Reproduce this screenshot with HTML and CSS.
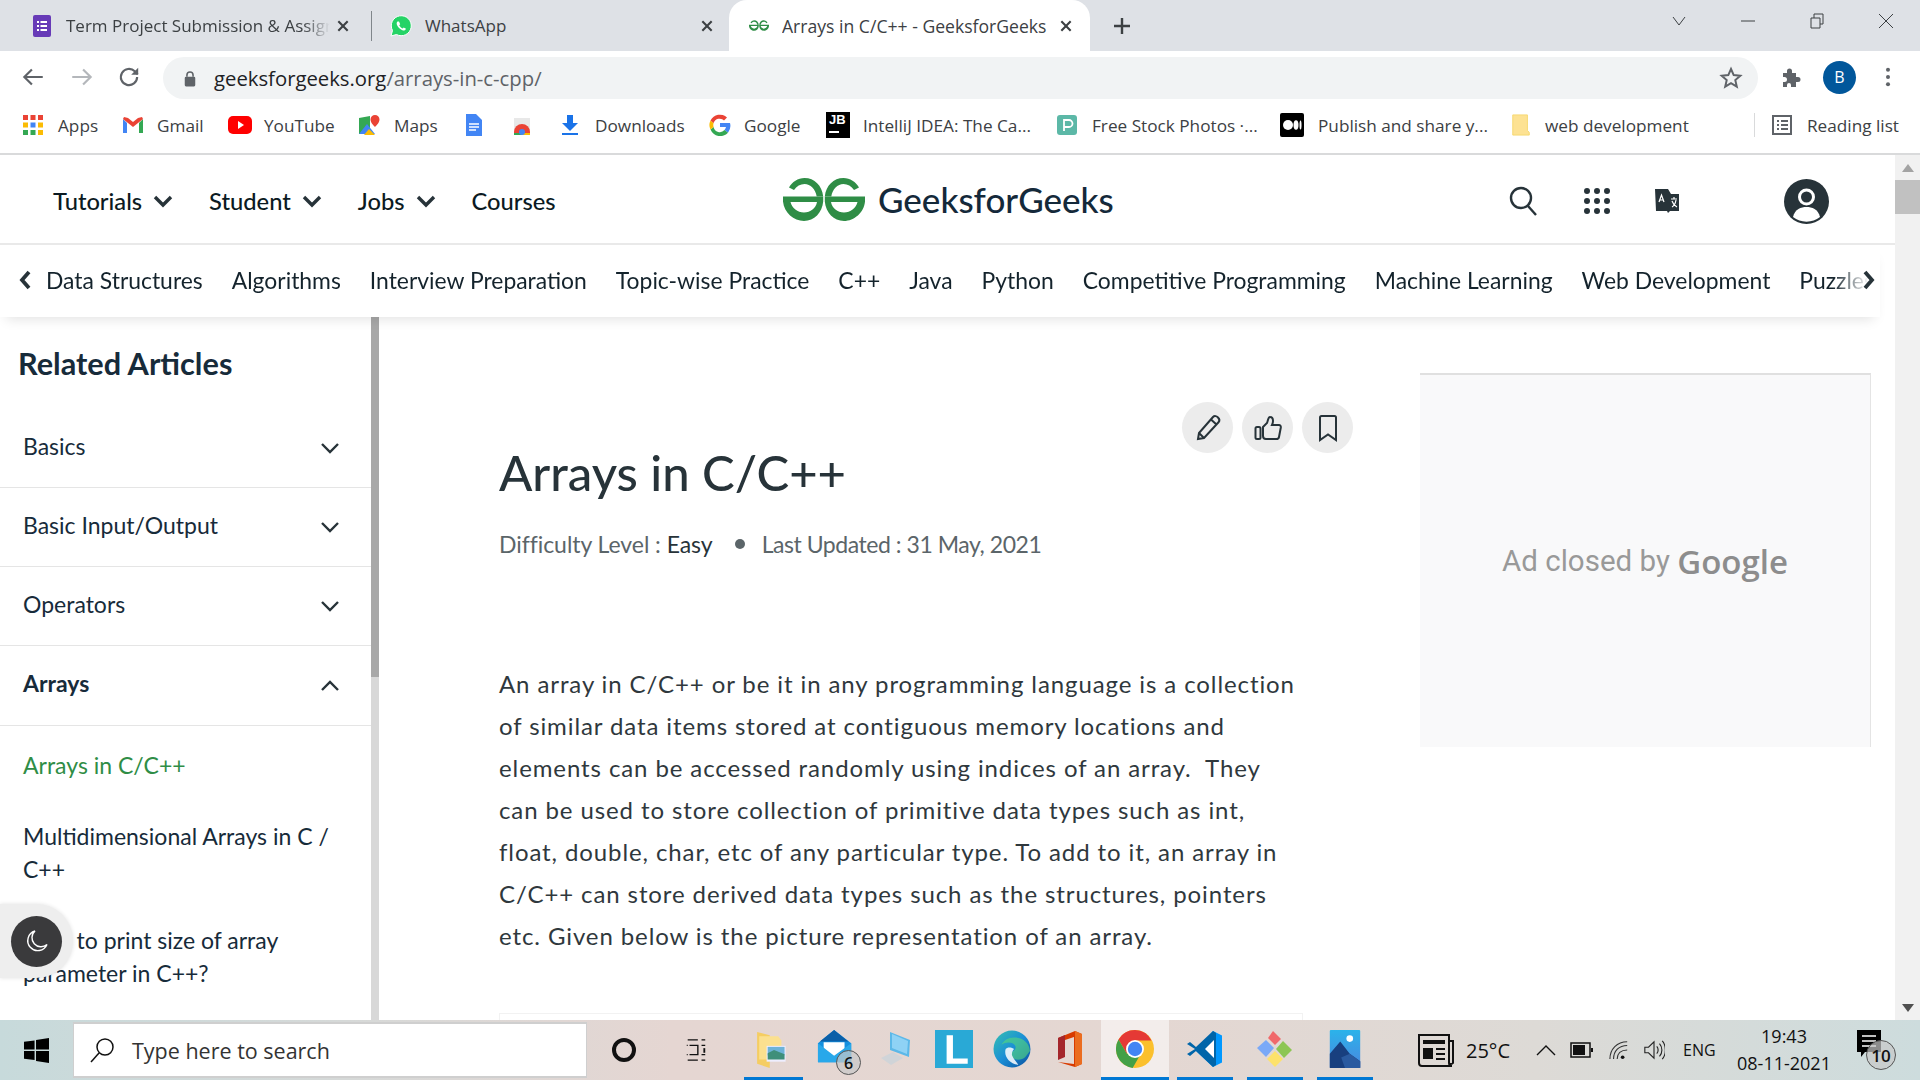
FILE: index.html
```html
<!DOCTYPE html>
<html lang="en">
<head>
<meta charset="utf-8">
<title>Arrays in C/C++ - GeeksforGeeks</title>
<link rel="stylesheet" href="styles.css">
</head>
<body>
<div class="screen">

<div class="tabstrip">
  <div class="tab tab-one">
    <svg class="fav" viewBox="0 0 24 24"><rect x="3" y="1" width="18" height="22" rx="2" fill="#673ab7"/><path d="M7 7h2v2H7zM7 11h2v2H7zM7 15h2v2H7zM10.500 7H17v2h-6.500zM10.500 11H17v2h-6.500zM10.500 15H17v2h-6.500z" fill="#fff"/></svg>
    <span class="tab-title fade">Term Project Submission &amp; Assignment</span>
    <svg class="tab-x" viewBox="0 0 12 12"><path d="M2 2l8 8M10 2l-8 8"/></svg>
  </div>
  <div class="tab-sep"></div>
  <div class="tab tab-two">
    <svg class="fav" viewBox="0 0 24 24"><path d="M2 22l1.500-5.500A10 10 0 1 1 7.500 20.500z" fill="#25d366" stroke="#fff" stroke-width="1"/><path d="M8.500 7.500c-1 1-1.200 2.500 0 4.500s3.500 4 5.500 4.500c1.500.3 2.500-.5 3-1.700l-2.300-1.300-1 1c-1.500-.5-2.700-1.800-3.500-3.300l1-1-1.200-2.700z" fill="#fff"/></svg>
    <span class="tab-title">WhatsApp</span>
    <svg class="tab-x" viewBox="0 0 12 12"><path d="M2 2l8 8M10 2l-8 8"/></svg>
  </div>
  <div class="tab tab-active">
    <svg class="fav-small" viewBox="0 0 82 43"><use href="#gfg"/></svg>
    <span class="tab-title">Arrays in C/C++ - GeeksforGeeks</span>
    <svg class="tab-x" viewBox="0 0 12 12"><path d="M2 2l8 8M10 2l-8 8"/></svg>
  </div>
  <svg class="newtab" viewBox="0 0 20 20"><path d="M10 2v16M2 10h16"/></svg>
  <div class="winctl">
    <svg viewBox="0 0 16 12"><path d="M2 2l6 8 6-8"/></svg>
    <svg viewBox="0 0 16 12"><path d="M1 6h14"/></svg>
    <svg viewBox="0 0 16 16"><path d="M2 5h9v10H2zM5 5V1h9v10h-3"/></svg>
    <svg viewBox="0 0 16 16"><path d="M1 1l14 14M15 1L1 15"/></svg>
  </div>
</div>

<div class="toolbar">
  <svg class="tool" viewBox="0 0 24 24"><path d="M21 12H4M11 5l-7 7 7 7" fill="none" stroke="#5f6368" stroke-width="2"/></svg>
  <svg class="tool" viewBox="0 0 24 24"><path d="M3 12h17M13 5l7 7-7 7" fill="none" stroke="#b4b7bb" stroke-width="2"/></svg>
  <svg class="tool" viewBox="0 0 24 24"><path d="M19.500 12a7.500 7.500 0 1 1-2.200-5.300L20 9.500" fill="none" stroke="#5f6368" stroke-width="2"/><path d="M20.500 3.500v6.500h-6.500z" fill="#5f6368"/></svg>
  <div class="omnibox">
    <svg class="lock" viewBox="0 0 16 20"><path d="M4.500 8V6a3.500 3.500 0 0 1 7 0v2" fill="none" stroke="#5f6368" stroke-width="1.800"/><rect x="2" y="8" width="12" height="11" rx="1.500" fill="#5f6368"/></svg>
    <span class="url"><b>geeksforgeeks.org</b>/arrays-in-c-cpp/</span>
    <svg class="star" viewBox="0 0 24 24"><path d="M12 3l2.700 6.100 6.600.6-5 4.400 1.500 6.500L12 17.200l-5.800 3.400 1.500-6.500-5-4.400 6.600-.6z" fill="none" stroke="#5f6368" stroke-width="2"/></svg>
  </div>
  <svg class="puzzle" viewBox="0 0 24 24"><path d="M4 8h4V6a2.500 2.500 0 0 1 5 0v2h4v4h2a2.500 2.500 0 0 1 0 5h-2v5h-5v-2a2 2 0 0 0-4 0v2H4v-5h1.500a2.500 2.500 0 0 0 0-5H4z" fill="#5f6368"/></svg>
  <div class="avatar">B</div>
  <svg class="menu" viewBox="0 0 6 24"><circle cx="3" cy="4" r="2.200"/><circle cx="3" cy="12" r="2.200"/><circle cx="3" cy="20" r="2.200"/></svg>
</div>

<div class="bookmarks">
  <div class="bm bm-apps"><svg class="bi" viewBox="0 0 22 22"><g fill="#ea4335"><rect x="1" y="1" width="5" height="5"/><rect x="8.500" y="1" width="5" height="5"/><rect x="16" y="1" width="5" height="5"/></g><g fill="#fbbc04"><rect x="1" y="8.500" width="5" height="5"/><rect x="16" y="8.500" width="5" height="5"/></g><rect x="8.500" y="8.500" width="5" height="5" fill="#4285f4"/><g fill="#34a853"><rect x="1" y="16" width="5" height="5"/><rect x="8.500" y="16" width="5" height="5"/></g><rect x="16" y="16" width="5" height="5" fill="#fbbc04"/></svg><span>Apps</span></div>
  <div class="bm bm-gmail"><svg class="bi" viewBox="0 0 22 22"><path d="M1 5v14h4V9z" fill="#4285f4"/><path d="M21 5v14h-4V9z" fill="#34a853"/><path d="M1 5l10 8 10-8-1-2-4 1-5 4-5-4-4-1z" fill="#ea4335"/></svg><span>Gmail</span></div>
  <div class="bm bm-yt"><svg class="bi-wide" viewBox="0 0 24 20"><rect y="1" width="24" height="18" rx="5" fill="#f00"/><path d="M10 6l6 4-6 4z" fill="#fff"/></svg><span>YouTube</span></div>
  <div class="bm bm-maps"><svg class="bi" viewBox="0 0 22 22"><path d="M1 4l11-2v18H1z" fill="#34a853"/><path d="M1 20l8-10 8 10z" fill="#4285f4"/><path d="M6 21l5-6 6 6z" fill="#fbbc04"/><path d="M17 1a4.500 4.500 0 0 0-4.500 4.500C12.500 9 17 13 17 13s4.500-4 4.500-7.500A4.500 4.500 0 0 0 17 1z" fill="#ea4335"/></svg><span>Maps</span></div>
  <div class="bm bm-docs"><svg class="bi" viewBox="0 0 22 22"><path d="M4 0h10l6 6v16H4z" fill="#4285f4"/><path d="M7 10h10M7 13h10M7 16h7" stroke="#fff" stroke-width="1.500"/></svg></div>
  <div class="bm bm-store"><svg class="bi" viewBox="0 0 22 22"><path d="M3 4h16v17H3z" fill="#e8e8e8"/><path d="M3 20v-2a8 8 0 0 1 16 0v2z" fill="#ea4335"/><path d="M3 21v-2h8v2z" fill="#34a853"/><path d="M11 21v-2h8v2z" fill="#fbbc04"/><circle cx="11" cy="18" r="3" fill="#4285f4"/></svg></div>
  <div class="bm bm-dl"><svg class="bi" viewBox="0 0 22 22"><path d="M8 1h6v8h5l-8 8-8-8h5zM3 19h16v2H3z" fill="#1a73e8"/></svg><span>Downloads</span></div>
  <div class="bm bm-g"><svg class="bi" viewBox="0 0 22 22"><path d="M11 9v4h6a6 6 0 0 1-1.500 3l3.500 2.700A11 11 0 0 0 21 9z" fill="#4285f4"/><path d="M4.600 13L1.500 15.600A10.500 10.500 0 0 0 19 18.700L15.500 16A6.300 6.300 0 0 1 4.600 13z" fill="#34a853"/><path d="M1.500 6.400a10.500 10.500 0 0 0 0 9.200L4.600 13a6.300 6.300 0 0 1 0-4z" fill="#fbbc04"/><path d="M1.500 6.400L4.600 9A6.300 6.300 0 0 1 15 6.500l3-3A10.500 10.500 0 0 0 1.500 6.400z" fill="#ea4335"/></svg><span>Google</span></div>
  <div class="bm bm-jb"><div class="jb">JB<i></i></div><span>IntelliJ IDEA: The Ca...</span></div>
  <div class="bm bm-px"><svg class="bi" viewBox="0 0 22 22"><rect x="1" y="1" width="20" height="20" rx="3" fill="#5cb8a7"/><path d="M8 5v12M8 6h5a3 3 0 0 1 0 7H8" fill="none" stroke="#fff" stroke-width="1.800"/></svg><span>Free Stock Photos ·...</span></div>
  <div class="bm bm-md"><svg class="bi-wide" viewBox="0 0 24 24"><rect width="24" height="24" rx="2" fill="#000"/><circle cx="8" cy="12" r="5" fill="#fff"/><ellipse cx="16" cy="12" rx="2.500" ry="4.800" fill="#fff"/><ellipse cx="20.500" cy="12" rx="1" ry="4.500" fill="#fff"/></svg><span>Publish and share y...</span></div>
  <div class="bm bm-fold"><svg class="bi" viewBox="0 0 22 24"><path d="M2 1h16v17l2 2v3H2z" fill="#fde293" stroke="#f6d86b"/></svg><span>web development</span></div>
  <div class="bm-sep"></div>
  <div class="bm bm-read"><svg class="bi" viewBox="0 0 22 22"><rect x="2" y="2" width="18" height="18" fill="none" stroke="#5f6368" stroke-width="2"/><path d="M6 7h2M10 7h7M6 11h2M10 11h7M6 15h2M10 15h7" stroke="#5f6368" stroke-width="1.800"/></svg><span>Reading list</span></div>
</div>

<div class="page">
  <div class="site">
    <header class="head">
      <nav class="menu-main">
        <a>Tutorials<svg class="chev" viewBox="0 0 20 14"><path d="M2 3l8 8 8-8"/></svg></a>
        <a>Student<svg class="chev" viewBox="0 0 20 14"><path d="M2 3l8 8 8-8"/></svg></a>
        <a>Jobs<svg class="chev" viewBox="0 0 20 14"><path d="M2 3l8 8 8-8"/></svg></a>
        <a>Courses</a>
      </nav>
      <div class="logo">
        <svg class="logo-mark" viewBox="0 0 82 43"><g id="gfg" fill="#2f8d46"><path d="M6 9.500C9 4 15 0 21.500 0 31.500 0 39 7.500 40.200 18.500H33.700C32.500 11 27.500 6 21.500 6 17.500 6 13.500 8 11 12z"/><path d="M0 18.500h40.200v5c-1 11-9 19.500-19.200 19.500S1 34.500 0 23.500zM7.500 24c1.500 6 7 10.500 13.500 10.500S33 30 34 24z" fill-rule="evenodd"/><path d="M76 9.500C73 4 67 0 60.500 0 50.500 0 43 7.500 41.800 18.500h6.500C49.500 11 54.500 6 60.500 6c4 0 8 2 10.500 6z"/><path d="M82 18.500H41.800v5C42.800 34.500 50.800 43 61 43s20-8.500 21-19.500zM74.500 24c-1.500 6-7 10.500-13.500 10.500S49 30 48 24z" fill-rule="evenodd"/></g></svg>
        <span class="logo-text">GeeksforGeeks</span>
      </div>
      <div class="head-icons">
        <svg class="hi-search" viewBox="0 0 30 30"><circle cx="13" cy="12" r="10" fill="none" stroke="#273339" stroke-width="2.400"/><path d="M20 20l8 9" stroke="#273339" stroke-width="2.400"/></svg>
        <svg class="hi-apps" viewBox="0 0 28 28"><g fill="#273339"><circle cx="4" cy="4" r="3"/><circle cx="14" cy="4" r="3"/><circle cx="24" cy="4" r="3"/><circle cx="4" cy="14" r="3"/><circle cx="14" cy="14" r="3"/><circle cx="24" cy="14" r="3"/><circle cx="4" cy="24" r="3"/><circle cx="14" cy="24" r="3"/><circle cx="24" cy="24" r="3"/></g></svg>
        <svg class="hi-tr" viewBox="0 0 26 26"><path d="M1 1h13l3 5h8v17h-9l-2 2-1-2H2z" fill="#273339"/><path d="M5 14l2.500-7L10 14M6 12h3M17 11h6M20 9v2M18 19c2-1 3.500-4 4-7M18 13c1 3 3 5 5 6" fill="none" stroke="#fff" stroke-width="1.200"/></svg>
        <svg class="hi-user" viewBox="0 0 45 45"><circle cx="22.500" cy="22.500" r="22.500" fill="#273339"/><circle cx="22.500" cy="18" r="7" fill="none" stroke="#fff" stroke-width="3"/><path d="M9 38c2-8 8-10 13.500-10S34 30 36 38a22 22 0 0 1-27 0z" fill="#fff"/></svg>
      </div>
    </header>
    <nav class="subnav">
      <svg class="nav-arrow" viewBox="0 0 12 20"><path d="M10 2l-7 8 7 8"/></svg>
      <div class="subnav-items">
        <a>Data Structures</a><a>Algorithms</a><a>Interview Preparation</a><a>Topic-wise Practice</a><a>C++</a><a>Java</a><a>Python</a><a>Competitive Programming</a><a>Machine Learning</a><a>Web Development</a><a>Puzzles</a>
      </div>
      <svg class="nav-arrow nav-next" viewBox="0 0 12 20"><path d="M2 2l7 8-7 8"/></svg>
    </nav>
    <div class="content">
      <aside class="side">
        <div class="side-body">
          <h2 class="side-title">Related Articles</h2>
          <div class="acc">Basics<svg class="chev-thin" viewBox="0 0 20 14"><path d="M2 3l8 8 8-8"/></svg></div>
          <div class="acc">Basic Input/Output<svg class="chev-thin" viewBox="0 0 20 14"><path d="M2 3l8 8 8-8"/></svg></div>
          <div class="acc">Operators<svg class="chev-thin" viewBox="0 0 20 14"><path d="M2 3l8 8 8-8"/></svg></div>
          <div class="acc acc-open">Arrays<svg class="chev-thin" viewBox="0 0 20 14"><path d="M2 11l8-8 8 8"/></svg></div>
          <ul class="sublist">
            <li class="current">Arrays in C/C++</li>
            <li>Multidimensional Arrays in C / C++</li>
            <li>How to print size of array parameter in C++?</li>
          </ul>
        </div>
        <div class="side-track"><div class="side-thumb"></div></div>
        <div class="night"><div class="night-btn"><svg viewBox="0 0 24 24"><path d="M10 2a10 10 0 1 0 12 13.500A9 9 0 0 1 10 2z" fill="none" stroke="#fff" stroke-width="1.400"/></svg></div></div>
      </aside>
      <main class="article">
        <div class="actions">
          <div class="act"><svg viewBox="0 0 28 28"><path d="M4 25l1-6L19 3c1.500-1.500 3.500-1 5 .5s1.800 3.300.5 4.800L10 24zM17 5.500l5.500 5M5 19l5 5" fill="none" stroke="#273339" stroke-width="2"/></svg></div>
          <div class="act"><svg viewBox="0 0 28 28"><rect x="1.500" y="13" width="5" height="12" rx="1.500" fill="none" stroke="#273339" stroke-width="2"/><path d="M9 13l4-4c1-2 1-6 3-6s3 2 3 4-1 4-1 4h7c1 0 2 1 1.800 2.500L25 23c-.3 1.500-1 2-2.500 2H12c-2 0-3-1-3-3z" fill="none" stroke="#273339" stroke-width="2"/></svg></div>
          <div class="act"><svg viewBox="0 0 28 28"><path d="M6 3.500c0-1 .5-1.500 1.500-1.500h13c1 0 1.500.5 1.500 1.500V26l-8-5.500L6 26z" fill="none" stroke="#273339" stroke-width="2"/></svg></div>
        </div>
        <h1 class="title">Arrays in C/C++</h1>
        <div class="meta"><span>Difficulty Level : </span><b>Easy</b><i class="dot"></i><span class="updated">Last Updated : 31 May, 2021</span></div>
        <p class="para">An array in C/C++ or be it in any programming language is a collection<br>of similar data items stored at contiguous memory locations and<br>elements can be accessed randomly using indices of an array.&nbsp; They<br>can be used to store collection of primitive data types such as int,<br>float, double, char, etc of any particular type. To add to it, an array in<br>C/C++ can store derived data types such as the structures, pointers<br>etc. Given below is the picture representation of an array.</p>
        <div class="figure"></div>
      </main>
      <aside class="adcol">
        <div class="ad">Ad closed by <b>Google</b></div>
      </aside>
    </div>
  </div>
  <div class="vscroll">
    <i class="up"></i>
    <div class="vthumb"></div>
    <i class="down"></i>
  </div>
</div>

<footer class="taskbar">
  <svg class="win" viewBox="0 0 26 26"><path d="M0 4l11-1.500V12H0zM12.500 2.200L26 0v12H12.500zM0 13.500h11v9.500L0 21.500zM12.500 13.500H26V26l-13.500-2z" fill="#000"/></svg>
  <div class="search">
    <svg viewBox="0 0 26 26"><circle cx="16" cy="10" r="8" fill="none" stroke="#111" stroke-width="1.500"/><path d="M10 16L2 25" stroke="#111" stroke-width="1.500"/></svg>
    <span>Type here to search</span>
  </div>
  <div class="cortana"></div>
  <svg class="taskview" viewBox="0 0 26 26"><path d="M4 2h11M4 24h11M6 8h9v10H6M4 8h-1M4 18h-1M19 2h4M19 24h4M19 8h4M19 18h4" fill="none" stroke="#111" stroke-width="1.500"/><path d="M21 11h2v5h-2z" fill="#111"/></svg>
  <div class="apps">
    <div class="app on"><svg viewBox="0 0 34 36"><path d="M1 2l12 3v31L1 32z" fill="#f5cd62"/><path d="M3 6h18l3 4v18H3z" fill="#fbe08f"/><rect x="10" y="15" width="18" height="15" fill="#eef"/><path d="M11 16h16v8H11z" fill="#6db3d8"/><path d="M11 22l6-3 10 4v5H11z" fill="#3f8f7a"/></svg></div>
    <div class="app"><svg viewBox="0 0 40 40"><path d="M18 0L36 14v20H1V14z" fill="#1490df"/><path d="M7 13h22v7l-11 8-11-8z" fill="#fff"/><path d="M1 14l17 13 18-13v20H1z" fill="#28a8ea"/><path d="M18 0L33 12H3z" fill="#0a5fa8"/></svg><em class="badge">6</em></div>
    <div class="app"><svg viewBox="0 0 36 38"><path d="M12 2l20 8-1 17-19-7z" fill="#5cb8e8"/><path d="M14 4l16 7-1 13-15-6z" fill="#8fd2f5"/><path d="M3 28l12-6 10 6-12 7z" fill="#d0d4d8"/></svg></div>
    <div class="app"><svg viewBox="0 0 36 36"><rect width="36" height="36" fill="#29a9d6"/><path d="M11 5h6v22h14v5H11z" fill="#fff"/></svg></div>
    <div class="app"><svg viewBox="0 0 36 36"><defs><linearGradient id="edge" x1="0" y1="0" x2="1" y2="1"><stop offset="0" stop-color="#35c1b0"/><stop offset=".5" stop-color="#1b8fd6"/><stop offset="1" stop-color="#0a4f9e"/></linearGradient></defs><circle cx="18" cy="18" r="17.500" fill="url(#edge)"/><path d="M35 20c-.5-8-7-13-15-13-6 0-10 3-12 7 4-3 11-3 13 1 1 2 0 4-2 5-3 2-2 7 3 8 3 .5 7-.5 9-3z" fill="#57d97a" opacity=".6"/><path d="M12 18c-2 6 3 14 12 15-2-3-5-6-6-9-.5-3 1-5 2-6-2-2-7-2-8 0z" fill="#fff" opacity=".85"/></svg></div>
    <div class="app"><svg viewBox="0 0 30 38"><path d="M3 8L20 1l7 3v30l-7 3-17-5 16 2V7l-9 3v14l-7 3z" fill="#d83b01"/><path d="M20 1l7 3v30l-7 3z" fill="#eb6c1f"/><path d="M3 8l7-3v22l-7 3z" fill="#a4262c"/></svg></div>
    <div class="app active"><svg viewBox="0 0 36 36"><circle cx="18" cy="18" r="18" fill="#fbc02d"/><path d="M18 0a18 18 0 0 0-15.600 9L10 22 18 10h15.600A18 18 0 0 0 18 0z" fill="#e53935"/><path d="M2.400 9A18 18 0 0 0 15.800 35.900L23.500 22.500 18 26 10 22z" fill="#43a047"/><circle cx="18" cy="18" r="8.500" fill="#fff"/><circle cx="18" cy="18" r="6.800" fill="#4285f4"/></svg></div>
    <div class="app on"><svg viewBox="0 0 36 38"><path d="M26 1l9 4.500v27L26 37 9 21z" fill="#0098ff"/><path d="M26 1L9 17 3 12 0 14l8 5-8 5 3 2 6-5 17 16 3-2V3z" fill="#0065a9"/><path d="M27 10v18l-9-9z" fill="#fff"/></svg></div>
    <div class="app on"><svg viewBox="0 0 36 38"><path d="M16 1l8 8-6 6-7-7z" fill="#f0696b"/><path d="M26 11l9 9-8 8-8-9z" fill="#8cc653"/><path d="M9 10l8 8-8 9-9-9z" fill="#7aa9f7"/><path d="M18 21l8 8-8 8-8-8z" fill="#fde26b"/></svg></div>
    <div class="app on"><svg viewBox="0 0 32 40"><defs><linearGradient id="ph" x1="0" y1="0" x2="0" y2="1"><stop offset="0" stop-color="#2bb3ea"/><stop offset="1" stop-color="#4a86e0"/></linearGradient></defs><rect width="32" height="40" rx="1" fill="url(#ph)"/><circle cx="21" cy="9" r="3.500" fill="#fff"/><path d="M0 40V25l11-13 10 13 11 8v7z" fill="#183f7f"/><path d="M16 40l-4-11 9-4 11 8v7z" fill="#2a5aa0"/></svg></div>
  </div>
  <div class="tray">
    <svg class="t-news" viewBox="0 0 36 36"><path d="M1 3h30v28a3 3 0 0 0 3 3H4a3 3 0 0 1-3-3zM31 9h4v22a2.500 2.500 0 0 1-4 0" fill="none" stroke="#111" stroke-width="2"/><path d="M5 8h22v4H5zM5 16h10v11H5zM18 16h9v2h-9zM18 21h9v2h-9zM18 26h9v2h-9z" fill="#111"/></svg>
    <span class="t-temp">25°C</span>
    <svg class="t-up" viewBox="0 0 20 12"><path d="M1 11l9-9 9 9"/></svg>
    <svg class="t-bat" viewBox="0 0 24 16"><rect x="1" y="1" width="19" height="14" fill="none" stroke="#111" stroke-width="1.500"/><rect x="3" y="3" width="12" height="10" fill="#111"/><path d="M21 6h2v4h-2z" fill="#111"/></svg>
    <svg class="t-wifi" viewBox="0 0 22 22"><path d="M1 21C1 10 9 2 20 2M5 21c0-9 6-15 15-15M9 21c0-6 4-10 11-10" fill="none" stroke="#333" stroke-width="1.200"/><circle cx="15" cy="19" r="2" fill="#111"/></svg>
    <svg class="t-snd" viewBox="0 0 24 24"><path d="M2 9h4l6-6v18l-6-6H2zM15 8c2 2 2 6 0 8M18 5c3.500 4 3.500 10 0 14M21 2c4.500 5 4.500 15 0 20" fill="none" stroke="#222" stroke-width="1.200"/></svg>
    <span class="t-eng">ENG</span>
    <div class="t-clock"><span>19:43</span><span>08-11-2021</span></div>
    <div class="t-note"><svg viewBox="0 0 24 28"><path d="M0 0h24v22H8l-4 5v-5H0z" fill="#000"/><path d="M5 6h14M5 11h14M5 16h14" stroke="#fff" stroke-width="1.500"/></svg><em class="badge">10</em></div>
  </div>
</footer>

</div>
</body>
</html>
```
FILE: styles.css
```css
* { box-sizing: border-box; }
html, body { margin: 0; padding: 0; height: 100%; overflow: hidden; }
body { font-family: "Lato", "Liberation Sans", sans-serif; color: #273339; background: #fff; }
.screen { width: 1920px; height: 1080px; display: flex; flex-direction: column; overflow: hidden; }

/* tab strip */
.tabstrip { height: 51px; background: #dee1e6; display: flex; align-items: center; font-family: "Open Sans", sans-serif; font-size: 17px; color: #3c4043; flex: none; }
.tab { height: 51px; display: flex; align-items: center; flex: none; }
.tab-one { width: 372px; padding-left: 30px; }
.tab-two { width: 357px; padding-left: 17px; }
.tab-two .tab-x { margin-right: 15px; }
.tab-active { width: 361px; padding-left: 18px; background: #fff; border-radius: 18px 18px 0 0; color: #3c4043; }
.fav { width: 24px; height: 24px; flex: none; }
.fav-small { width: 20px; height: 11px; flex: none; margin-right: 13px; margin-left: 2px; }
.tab-title { margin-left: 12px; white-space: nowrap; overflow: hidden; flex: 1; }
.tab-active .tab-title { margin-left: 0; font-size: 17.6px; }
.fade { max-width: 264px; -webkit-mask-image: linear-gradient(90deg, #000 90%, transparent); mask-image: linear-gradient(90deg, #000 90%, transparent); }
.tab-x { width: 14px; height: 14px; flex: none; margin-right: 17px; margin-left: 6px; }
.tab-x path { stroke: #3c4043; stroke-width: 1.800; fill: none; }
.tab-sep { width: 1px; height: 30px; background: #80868b; margin-left: -1px; flex: none; }
.newtab { width: 20px; height: 20px; margin-left: 22px; flex: none; }
.newtab path { stroke: #3c4043; stroke-width: 2.400; fill: none; }
.winctl { margin-left: auto; display: flex; align-items: center; align-self: flex-start; height: 42px; padding-right: 26px; gap: 53px; }
.winctl svg { width: 16px; height: 16px; fill: none; stroke: #3c4043; stroke-width: 1; }

/* toolbar */
.toolbar { height: 51px; background: #fff; display: flex; align-items: center; padding-left: 20px; flex: none; }
.tool { width: 26px; height: 26px; margin-right: 23px; flex: none; }
.tool:nth-child(2) { margin-right: 21px; }
.tool:nth-child(3) { margin-right: 21px; }
.omnibox { width: 1595px; height: 42px; margin-top: 3px; background: #f1f3f4; border-radius: 21px; display: flex; align-items: center; padding-left: 20px; padding-right: 15px; flex: none; }
.lock { width: 14px; height: 19px; flex: none; }
.url { margin-left: 17px; font-family: "Open Sans", sans-serif; font-size: 20.3px; color: #5f6368; flex: 1; }
.url b { font-weight: 400; color: #202124; }
.star { width: 24px; height: 24px; flex: none; }
.puzzle { width: 24px; height: 24px; margin-left: 21px; flex: none; }
.avatar { width: 33px; height: 33px; margin-left: 20px; margin-top: 1px; border-radius: 50%; background: #01579b; color: #fff; font-family: "Open Sans", sans-serif; font-size: 16px; display: flex; align-items: center; justify-content: center; flex: none; }
.menu { width: 6px; height: 22px; margin-left: 29px; fill: #5f6368; flex: none; }

/* bookmarks */
.bookmarks { height: 53px; background: #fff; border-bottom: 2px solid #d9dadb; display: flex; align-items: center; font-family: "Open Sans", sans-serif; font-size: 17.2px; color: #3c4043; padding: 0 0 5px 22px; flex: none; }
.bm { display: flex; align-items: center; white-space: nowrap; flex: none; }
.bm span { margin-left: 14px; }
.bi { width: 22px; height: 22px; flex: none; }
.bi-wide { width: 24px; height: 24px; flex: none; }
.bm-apps { width: 100px; }
.bm-gmail { width: 106px; }
.bm-gmail span, .bm-g span, .bm-jb span, .bm-fold span { margin-left: 13px; }
.bm-yt { width: 130px; }
.bm-yt span { margin-left: 12px; }
.bm-maps { width: 104px; }
.bm-docs { width: 49px; }
.bm-store { width: 48px; }
.bm-dl { width: 150px; }
.bm-g { width: 117px; }
.bm-jb { width: 230px; }
.bm-px { width: 224px; }
.bm-md { width: 230px; }
.bm-fold { width: 244px; }
.jb { width: 24px; height: 26px; background: #000; color: #fff; font-family: "Liberation Sans", sans-serif; font-size: 13px; font-weight: 700; line-height: 15px; padding-left: 3px; }
.jb i { display: block; width: 10px; height: 2px; background: #fff; margin-top: 4px; }
.bm-sep { width: 1px; height: 24px; background: #d9dadb; flex: none; }
.bm-read { margin-left: 16px; }

/* page */
.page { height: 865px; display: flex; flex: none; }
.site { width: 1895px; display: flex; flex-direction: column; }
.head { height: 90px; border-bottom: 2px solid #e9e9e9; display: flex; align-items: center; flex: none; padding-top: 4px; }
.menu-main { display: flex; align-items: center; padding-left: 53px; font-size: 23.7px; font-weight: 500; color: #0b1a22; width: 783px; }
.menu-main a { display: flex; align-items: center; margin-right: 36px; }
.chev { width: 20px; height: 14px; margin-left: 11px; }
.chev path { fill: none; stroke: #273339; stroke-width: 3.400; }
.logo { display: flex; align-items: center; width: 710px; flex: none; margin-bottom: 4px; }
.logo-mark { width: 82px; height: 43px; flex: none; }
.logo-text { margin-left: 13px; font-size: 35px; font-weight: 500; color: #14293a; }
.head-icons { display: flex; align-items: center; flex: none; margin-left: 15px; }
.hi-search { width: 30px; height: 30px; }
.hi-apps { width: 28px; height: 28px; margin-left: 45px; }
.hi-tr { width: 26px; height: 26px; margin-left: 43px; }
.hi-user { width: 45px; height: 45px; margin-left: 104px; }

.subnav { height: 72px; display: flex; align-items: center; width: 1880px; box-shadow: 0 8px 12px -6px rgba(0,0,0,.12); position: relative; z-index: 2; background: #fff; flex: none; padding-bottom: 2px; }
.nav-arrow { width: 12px; height: 20px; margin-left: 19px; flex: none; fill: none; stroke: #273339; stroke-width: 3.800; }
.subnav-items { display: flex; gap: 29px; margin-left: 15px; font-size: 22.9px; color: #14232c; white-space: nowrap; overflow: hidden; width: 1823px; flex: none; -webkit-mask-image: linear-gradient(90deg, #000 98%, transparent 100%); mask-image: linear-gradient(90deg, #000 98%, transparent 100%); }
.nav-next { margin-left: -6px; }

.content { display: flex; flex: 1; min-height: 0; }
.side { width: 379px; display: flex; position: relative; flex: none; }
.side-body { width: 371px; flex: none; }
.side-title { margin: 0; height: 92px; display: flex; align-items: center; padding: 0 0 0 18px; font-size: 30.7px; font-weight: 700; color: #172b3a; }
.acc { height: 79px; border-bottom: 1px solid #e5e5e5; display: flex; align-items: center; justify-content: space-between; padding: 0 31px 5px 23px; font-size: 23px; color: #172b3a; }
.acc-open { height: 80px; font-weight: 700; }
.chev-thin { width: 20px; height: 14px; fill: none; stroke: #273339; stroke-width: 2.400; margin-top: 5px; }
.sublist { list-style: none; margin: 0; padding: 5px 30px 0 23px; display: flex; flex-direction: column; gap: 2px; font-size: 23px; line-height: 33px; color: #172b3a; }
.sublist li { padding: 18px 0; }
.current { color: #2f8d46; }
.side-track { width: 8px; background: #d8d8d8; flex: none; }
.side-thumb { height: 360px; background: #a8a8a8; }
.night { position: absolute; left: 0; top: 587px; width: 73px; height: 74px; background: #eeeeee; border-radius: 0 37px 37px 0; box-shadow: 0 0 4px rgba(0,0,0,.12); display: flex; align-items: center; justify-content: flex-end; padding-right: 11px; }
.night-btn { width: 51px; height: 51px; border-radius: 50%; background: #3a3a3c; display: flex; align-items: center; justify-content: center; }
.night-btn svg { width: 24px; height: 24px; }

.article { width: 974px; padding: 85px 0 0 120px; flex: none; overflow: hidden; }
.actions { display: flex; justify-content: flex-end; gap: 9px; padding-right: -1px; }
.act { width: 51px; height: 51px; border-radius: 50%; background: #ececec; display: flex; align-items: center; justify-content: center; }
.act svg { width: 28px; height: 28px; }
.title { margin: 0; font-size: 49px; line-height: 38px; font-weight: 500; color: #273339; }
.meta { margin-top: 38px; line-height: 30px; font-size: 23px; color: #5b6569; display: flex; align-items: center; white-space: pre; letter-spacing: -.05px; }
.meta b { font-weight: 400; color: #273339; }
.dot { width: 10px; height: 10px; background: #5b6569; border-radius: 50%; margin: 0 17px 0 22px; }
.updated { letter-spacing: -.45px; }
.para { margin: 104px 0 0; font-size: 24px; line-height: 42px; color: #2f383d; letter-spacing: .9px; white-space: nowrap; }
.figure { margin-top: 56px; height: 40px; width: 804px; border: 1px solid #f2f2f2; }

.adcol { flex: 1; padding: 56px 24px 0 67px; }
.ad { height: 374px; background: #f9f9fa; border-top: 2px solid #e0e0e0; border-right: 1px solid #e4e4e4; display: flex; align-items: center; justify-content: center; font-family: "Roboto", sans-serif; font-size: 29.5px; color: #999; white-space: pre; }
.ad b { font-weight: 600; font-size: 33px; color: #8d8d8d; font-family: "Open Sans", sans-serif; }

.vscroll { width: 25px; background: #f1f1f1; display: flex; flex-direction: column; align-items: center; flex: none; }
.up { width: 0; height: 0; border: 6px solid transparent; border-top: 0; border-bottom: 8px solid #a3a3a3; margin-top: 9px; }
.vthumb { width: 100%; height: 34px; background: #c1c1c1; margin-top: 8px; }
.down { width: 0; height: 0; border: 6px solid transparent; border-bottom: 0; border-top: 8px solid #505050; margin-top: auto; margin-bottom: 8px; }

/* taskbar */
.taskbar { height: 60px; display: flex; align-items: center; background: linear-gradient(90deg, #c7dadb 0%, #d6d9d8 18%, #e5d6d2 35%, #e4d7d2 60%, #dddad6 80%, #cddcdd 100%); font-family: "Open Sans", sans-serif; color: #111; flex: none; }
.win { width: 25px; height: 25px; margin-left: 24px; flex: none; }
.search { width: 514px; height: 56px; margin-left: 24px; background: #fff; border: 2px solid #cfcfcf; border-width: 2px 1px; display: flex; align-items: center; padding-left: 15px; font-size: 21.5px; color: #333; flex: none; }
.search svg { width: 26px; height: 26px; flex: none; }
.search span { margin-left: 17px; }
.cortana { width: 24px; height: 24px; border: 4px solid #111; border-radius: 50%; margin-left: 25px; flex: none; }
.taskview { width: 24px; height: 26px; margin-left: 48px; flex: none; }
.apps { display: flex; margin-left: 36px; height: 60px; flex: none; }
.app { height: 60px; display: flex; align-items: center; justify-content: center; position: relative; border-bottom: 3px solid transparent; flex: none; }
.app svg { width: 38px; height: 38px; }
.app:nth-child(1) { width: 59px; }
.app:nth-child(2) { width: 59px; margin-left: 3px; }
.app:nth-child(3) { width: 58px; margin-left: 2px; }
.app:nth-child(4) { width: 58px; }
.app:nth-child(5) { width: 58px; }
.app:nth-child(6) { width: 58px; }
.app:nth-child(7) { width: 68px; margin-left: 2px; background: rgba(255,255,255,.55); border-bottom-color: #0078d4; }
.app:nth-child(8) { width: 56px; margin-left: 8px; }
.app:nth-child(9) { width: 56px; margin-left: 14px; }
.app:nth-child(10) { width: 56px; margin-left: 14px; }
.app.on { border-bottom-color: #0078d4; }
.badge { position: absolute; width: 25px; height: 25px; border-radius: 50%; border: 1px solid #555; background: rgba(200,200,200,.7); font-style: normal; font-size: 16px; font-weight: 600; display: flex; align-items: center; justify-content: center; right: 4px; bottom: 2px; }
.tray { display: flex; align-items: center; height: 60px; flex: 1; }
.t-news { width: 36px; height: 36px; margin-left: 45px; flex: none; }
.t-temp { font-size: 20px; margin-left: 12px; width: 54px; flex: none; }
.t-up { width: 20px; height: 12px; margin-left: 16px; fill: none; stroke: #111; stroke-width: 1.400; flex: none; }
.t-bat { width: 24px; height: 16px; margin-left: 14px; flex: none; }
.t-wifi { width: 20px; height: 22px; margin-left: 15px; flex: none; }
.t-snd { width: 22px; height: 24px; margin-left: 14px; flex: none; }
.t-eng { font-size: 16px; margin-left: 18px; width: 36px; flex: none; }
.t-clock { width: 96px; margin-left: 17px; display: flex; flex-direction: column; align-items: center; font-size: 18px; line-height: 27px; flex: none; }
.t-note { position: relative; width: 26px; height: 40px; margin-left: 25px; flex: none; }
.t-note svg { width: 24px; height: 28px; }
.t-note .badge { right: -13px; bottom: 0; width: 30px; height: 30px; font-size: 17px; }
```
